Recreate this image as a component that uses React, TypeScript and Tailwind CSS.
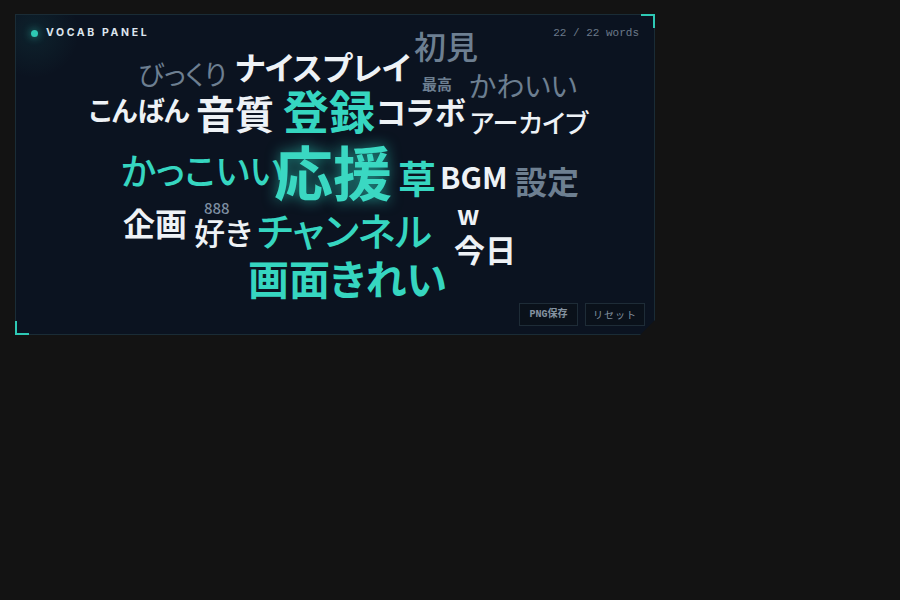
const words = [
  { text: 'びっくり', cls: 'left-[123px] top-[46px] text-[27px] font-normal text-[#6d7f91]' },
  { text: 'ナイスプレイ', cls: 'left-[220px] top-[36px] text-[32px] font-bold text-[#eef2f6]' },
  { text: '初見', cls: 'left-[399px] top-[15px] text-[32px] font-medium text-[#6d7f91]' },
  { text: '最高', cls: 'left-[407px] top-[62px] text-[15px] font-bold text-[#6d7f91]' },
  { text: 'かわいい', cls: 'left-[454px] top-[57px] text-[28px] font-normal text-[#6d7f91]' },
  { text: 'こんばん', cls: 'left-[74px] top-[82px] text-[27px] font-bold text-[#eef2f6]' },
  { text: '音質', cls: 'left-[181px] top-[79px] text-[39px] font-bold text-[#eef2f6]' },
  { text: '登録', cls: 'left-[268px] top-[72px] text-[46px] font-bold text-[#36d6c0]' },
  { text: 'コラボ', cls: 'left-[361px] top-[81px] text-[31px] font-bold text-[#eef2f6]' },
  { text: 'アーカイブ', cls: 'left-[455px] top-[95px] text-[26px] font-medium text-[#eef2f6]' },
  { text: 'かっこいい', cls: 'left-[106px] top-[137px] text-[36px] font-medium text-[#36d6c0]' },
  { text: '応援', cls: 'left-[259px] top-[127px] text-[59px] font-bold text-[#3ad8c2] [text-shadow:0_0_14px_rgba(45,212,191,0.65)]' },
  { text: '草', cls: 'left-[383px] top-[144px] text-[38px] font-bold text-[#36d6c0]' },
  { text: 'BGM', cls: 'left-[425px] top-[147px] text-[30px] font-bold text-[#eef2f6]' },
  { text: '設定', cls: 'left-[500px] top-[150px] text-[32px] font-bold text-[#6d7f91]' },
  { text: '企画', cls: 'left-[108px] top-[192px] text-[32px] font-bold text-[#eef2f6]' },
  { text: '888', cls: 'left-[189px] top-[186px] text-[15px] font-medium text-[#7d8ea0]' },
  { text: '好き', cls: 'left-[179px] top-[202px] text-[31px] font-medium text-[#eef2f6]' },
  { text: 'チャンネル', cls: 'left-[242px] top-[196px] text-[39px] font-medium text-[#36d6c0]' },
  { text: 'w', cls: 'left-[442px] top-[187px] text-[26px] font-bold text-[#eef2f6]' },
  { text: '今日', cls: 'left-[439px] top-[219px] text-[31px] font-bold text-[#eef2f6]' },
  { text: '画面きれい', cls: 'left-[233px] top-[243px] text-[41px] font-bold text-[#36d6c0]' },
]

export default function App() {
  return (
    <div className="min-h-[600px] w-full bg-[#131313] pl-[15px] pt-[14px]">
      <div className="relative h-[321px] w-[640px] [clip-path:polygon(0_0,100%_0,100%_calc(100%-15px),calc(100%-15px)_100%,0_100%)]">
        <div className="absolute inset-0 border border-[#1a2c36] bg-[#0b1320] [background-image:radial-gradient(circle_at_18px_18px,rgba(45,212,191,0.08),transparent_45px)]" />

        {/* corner brackets */}
        <div className="absolute right-0 top-0 h-[14px] w-[14px] border-r-2 border-t-2 border-[#2ec9b4]" />
        <div className="absolute bottom-0 left-0 h-[14px] w-[14px] border-b-2 border-l-2 border-[#2ec9b4]" />

        {/* header */}
        <div className="absolute left-[16px] right-[16px] top-[11px] flex items-center justify-between">
          <div className="flex items-center gap-[8px]">
            <span className="h-[7px] w-[7px] rounded-full bg-[#2ec9b4] shadow-[0_0_8px_rgba(45,212,191,0.7)]" />
            <span className="font-['Inter',sans-serif] text-[10.5px] font-bold tracking-[0.25em] text-[#dde5ee]">VOCAB PANEL</span>
          </div>
          <span className="font-['Liberation_Mono',monospace] text-[11px] text-[#6b7a8a]">22 / 22 words</span>
        </div>

        {/* word cloud */}
        <div className="absolute inset-0 font-['Noto_Sans_CJK_JP','Noto_Sans',sans-serif] [font-feature-settings:'palt']">
          {words.map((w) => (
            <span key={w.text} className={`absolute whitespace-nowrap leading-none ${w.cls}`}>
              {w.text}
            </span>
          ))}
        </div>

        {/* actions */}
        <div className="absolute bottom-[9px] right-[10px] flex gap-[7px]">
          <button className="flex h-[23px] w-[59px] items-center justify-center border border-[#1e2c37] bg-[#0a111a] font-['Liberation_Mono','Noto_Sans_CJK_JP',monospace] text-[10px] font-bold text-[#8593a1]">
            PNG保存
          </button>
          <button className="flex h-[23px] w-[60px] items-center justify-center border border-[#1e2c37] bg-[#0a111a] font-['Noto_Sans_CJK_JP',sans-serif] text-[10px] tracking-[0.1em] text-[#8593a1]">
            リセット
          </button>
        </div>
      </div>
    </div>
  )
}
